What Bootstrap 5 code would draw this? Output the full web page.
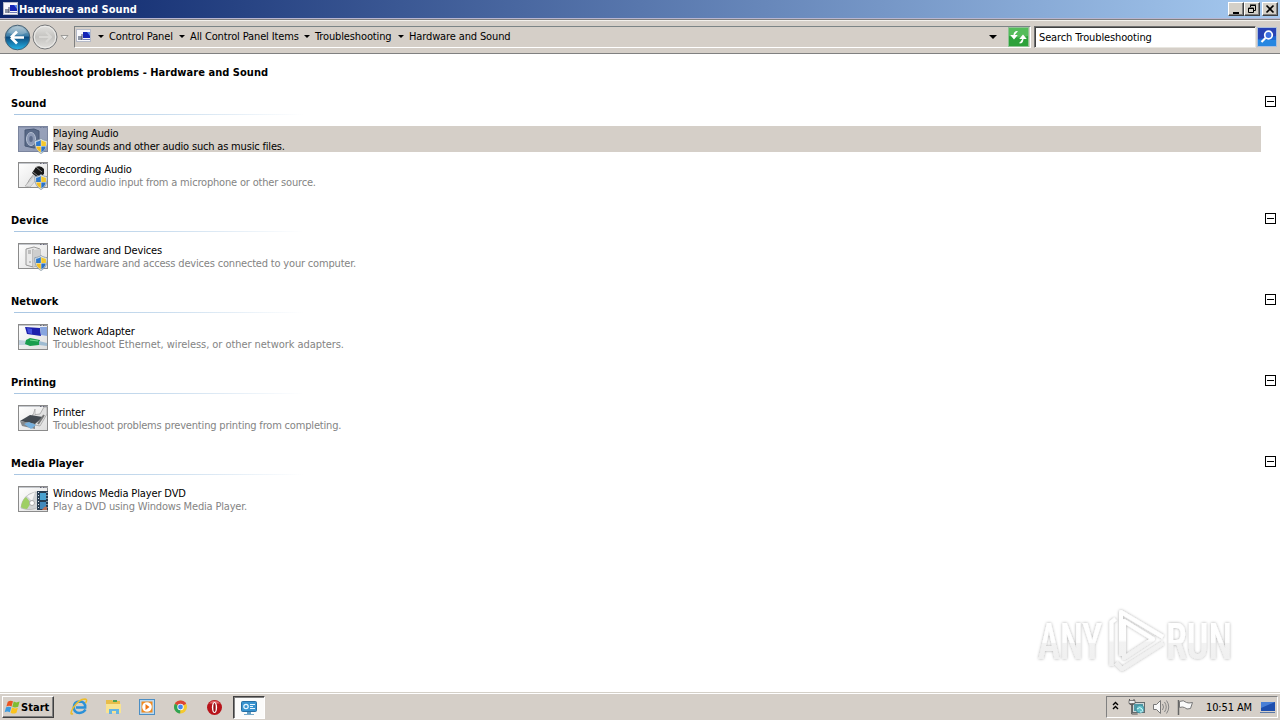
<!DOCTYPE html>
<html lang="en">
<head>
  <meta charset="UTF-8" />
  <title>Hardware and Sound</title>
  <link href="https://cdn.jsdelivr.net/npm/bootstrap@5.3.3/dist/css/bootstrap.min.css" rel="stylesheet" />
  <style>
    body {
      font: 11px/13px "DejaVu Sans Condensed", "DejaVu Sans", sans-serif;
      font-stretch: condensed;
      letter-spacing: -0.13px;
      color: #000;
      background: #fff;
      height: 720px;
      overflow: hidden;
      white-space: nowrap;
    }
    svg { flex: none; display: block; }
    .fw-bold { letter-spacing: 0.04px; }
    .face { background: #d5cfc8; }
    .titlebar {
      height: 18px;
      padding-left: 3px;
      padding-right: 2px;
      background: linear-gradient(90deg, #0a246a, #a6caf0);
      color: #fff;
    }
    .win-btn {
      width: 16px;
      height: 14px;
      background: #d4d0c8;
      border: 1px solid;
      border-color: #fff #404040 #404040 #fff;
      box-shadow: inset -1px -1px #808080;
    }
    .toolbar-row {
      height: 36px;
      padding: 4px 1px 0 4px;
      border-top: 1px solid #b9b6d0;
      border-bottom: 1px solid #808080;
      box-shadow: inset 0 1px #808080, inset 0 2px #f2f0ec;
    }
    .address {
      width: 957px;
      height: 22px;
      margin-left: 4px;
      margin-top: 3px;
      padding-left: 1px;
      border: 1px solid;
      border-color: #7b8486 #fff #fff #808080;
    }
    .crumb-list { padding-bottom: 2px; }
    .crumb-arrow {
      width: 0;
      border: 3px solid transparent;
      border-top-color: #000;
      border-bottom: 0;
    }
    .search-box {
      width: 222px;
      height: 22px;
      margin: 3px 1px 0 3px;
      padding: 1px 0 0 4px;
      background: #fff;
      border: 1px solid;
      border-color: #707070 #e8e6e0 #e8e6e0 #707070;
      box-shadow: inset 1px 1px #404040;
    }
    .pane { height: 638px; padding: 12px 4px 0 10px; }
    .section-head { height: 17px; padding-left: 1px; }
    .section-line {
      width: 290px;
      height: 1px;
      margin: 0 0 11px 4px;
      background: linear-gradient(90deg, #a9c6e2, #c8dcee 50%, #fff);
    }
    .section-block { height: 81px; }
    .section-block.two { height: 117px; }
    .collapse-box {
      width: 11px;
      height: 11px;
      margin-top: -1px;
      border: 1px solid #000;
      padding: 4px 1px;
    }
    .collapse-box span { display: block; height: 1px; background: #000; }
    .tool-row { height: 26px; margin: 0 15px 10px 8px; }
    .tool-text { padding-top: 1px; }
    .tool-desc { color: #848484; letter-spacing: -0.18px; }
    .tool-desc.wide { letter-spacing: -0.06px; }
    .tool-row.active .tool-text { background: #d5cfc8; }
    .tool-row.active .tool-desc { color: #000; }
    .taskbar {
      height: 28px;
      padding: 3px 2px 0;
      border-top: 1px solid #d4d0c8;
      box-shadow: inset 0 1px #fff;
    }
    .start-btn {
      width: 52px;
      height: 22px;
      padding-left: 1px;
      border: 1px solid;
      border-color: #fff #404040 #404040 #fff;
      box-shadow: inset -1px -1px #808080;
    }
    .task-active {
      width: 32px;
      height: 23px;
      margin-left: 10px;
      background: #fbfbfa;
      border: 1px solid;
      border-color: #404040 #fff #fff #404040;
      box-shadow: inset 1px 1px #808080;
    }
    .tray {
      width: 172px;
      height: 22px;
      padding-left: 5px;
      border: 1px solid;
      border-color: #808080 #fff #fff #808080;
    }
    .watermark { position: absolute; left: 1024px; top: 600px; overflow: visible; letter-spacing: 0; }
  </style>
</head>
<body class="d-flex flex-column">

  <!-- shared drawings -->
  <svg width="0" height="0" class="position-absolute">
    <defs>
      <linearGradient id="gBack" x1="0" y1="0" x2="0" y2="1">
        <stop offset="0" stop-color="#a9bfca" /><stop offset=".42" stop-color="#3f80aa" />
        <stop offset=".5" stop-color="#0d4d80" /><stop offset="1" stop-color="#27b6ea" />
      </linearGradient>
      <linearGradient id="gFwd" x1="0" y1="0" x2="0" y2="1">
        <stop offset="0" stop-color="#e4e3e0" /><stop offset=".5" stop-color="#c4c3c0" /><stop offset="1" stop-color="#e2e1de" />
      </linearGradient>
      <linearGradient id="gWin" x1="0" y1="0" x2="1" y2="1">
        <stop offset="0" stop-color="#fff" /><stop offset="1" stop-color="#dedede" />
      </linearGradient>
      <symbol id="shield" viewBox="0 0 14 16">
        <path d="M7 .5C5 2 3 2.500 .8 2.600 .6 8 2 13 7 15.500 12 13 13.400 8 13.200 2.600 11 2.500 9 2 7 .5Z" fill="#e6edf2" stroke="#8292a0" stroke-width=".8" />
        <path d="M6.800 2C5.300 3 3.800 3.600 2.100 3.800V8h4.700Z" fill="#2f78cc" />
        <path d="M7.300 2C8.800 3 10.200 3.600 11.900 3.800V8H7.300Z" fill="#f5c92c" />
        <path d="M2.200 8.400C2.800 11 4.200 13 6.800 14.300V8.400Z" fill="#f3bd20" />
        <path d="M11.800 8.400C11.200 11 9.800 13 7.300 14.300V8.400Z" fill="#2d72c4" />
      </symbol>
      <symbol id="frame" viewBox="0 0 31 27">
        <rect x=".5" y=".5" width="29" height="25" fill="url(#gWin)" stroke="#8b8b8b" />
        <path d="M1 1.500h28.500" stroke="#c4c7cc" />
        <path d="M22 1.500h1.500M25 1.500h1.500M27.500 1.500h1" stroke="#667" />
      </symbol>
      <symbol id="mini" viewBox="0 0 16 14">
        <rect x=".5" y=".5" width="14" height="12" fill="#f8f8fb" stroke="#b5bac8" />
        <path d="M7 3h7v6H7z" fill="#1526b5" /><path d="M11 3h3v4z" fill="#5d8df0" />
        <path d="M2 7h4v4H2z" fill="#8e96a5" /><path d="M6 5v6" stroke="#444d66" /><path d="M7 10.500h7" stroke="#7380b8" />
      </symbol>
      <symbol id="flag" viewBox="0 0 18 16">
        <path d="M4 2.500Q7 .5 9.500 2L8 7.500Q5.500 6 2.500 7.500Z" fill="#ea5421" />
        <path d="M10.300 2.300Q13 4 16.500 2.300L15 7.800Q11.500 9.500 8.800 7.800Z" fill="#7fbc32" />
        <path d="M2.200 8.300Q5 7 7.700 8.300L6.200 13.500Q3.500 12 .7 13.500Z" fill="#3b9be0" />
        <path d="M8.500 8.600Q11.500 10.300 14.700 8.700L13.200 14Q10 15.800 7 14Z" fill="#fbc31c" />
      </symbol>
    </defs>
  </svg>

  <div class="titlebar d-flex align-items-center flex-shrink-0">
    <svg width="16" height="14"><use href="#mini" /></svg>
    <span class="fw-bold">Hardware and Sound</span>
    <div class="win-btn ms-auto">
      <svg width="14" height="12"><path d="M4 9h6v2H4z" /></svg>
    </div>
    <div class="win-btn">
      <svg width="14" height="12" fill="none" stroke="#000"><path d="M5.500 4V2.500h5v5H9M5 2h6" /><path d="M3.500 5h5v4.500h-5zM3 5.500h6" /></svg>
    </div>
    <div class="win-btn" style="margin-left: 2px">
      <svg width="14" height="12"><path d="M3.500 2.500l7 7M10.500 2.500l-7 7" stroke="#000" stroke-width="1.700" /></svg>
    </div>
  </div>

  <div class="toolbar-row face d-flex flex-shrink-0">
    <svg width="66" height="28">
      <circle cx="13.500" cy="14.500" r="12.300" fill="url(#gBack)" stroke="#466073" />
      <path d="M4 9.500a10.500 10.500 0 0 1 19 0q-9 5-19 0" fill="#fff" opacity=".22" />
      <path d="M7 14.500l6-6M7 14.500l6 6M8 14.500h12" stroke="#fff" stroke-width="2.700" fill="none" />
      <circle cx="41" cy="14" r="12" fill="url(#gFwd)" stroke="#77797b" />
      <circle cx="41" cy="14" r="10.700" fill="none" stroke="#eeeeec" />
      <path d="M35 14h11M42 9l5 5-5 5" stroke="#d9d8d5" stroke-width="2" fill="none" />
      <path d="M57 12.500h7l-3.500 4z" fill="#f7f7f5" stroke="#8a8a88" stroke-width=".8" />
    </svg>
    <div class="address d-flex align-items-center">
      <svg width="16" height="16"><use href="#mini" height="14" /></svg>
      <div id="crumbs" class="crumb-list d-flex align-items-center"></div>
      <svg width="9" height="5" class="ms-auto" style="margin-right: 10px"><path d="M0 0h8L4 4z" /></svg>
      <svg width="22" height="20">
        <rect x=".5" y=".5" width="20" height="19" fill="#2da23b" stroke="#8fc394" />
        <path d="M1 1h19v8Q10 12 1 9z" fill="#6ccb6d" opacity=".65" />
        <path d="M9.500 4.500Q6 4.500 6 9M3.500 8.500h5L6 11.500z" fill="#fff" stroke="#fff" stroke-width="1.200" />
        <path d="M11.500 16Q15 16 15 11M12.500 11.500h5L15 8.500z" fill="#fff" stroke="#fff" stroke-width="1.200" />
      </svg>
    </div>
    <div class="search-box d-flex align-items-center">Search Troubleshooting</div>
    <svg width="20" height="22" style="margin-top: 3px">
      <rect x=".5" y="1.500" width="19" height="19" fill="#1f67d2" stroke="#a9bddd" />
      <path d="M1 2h18v8L1 13z" fill="#2842b4" /><path d="M1 14h18v6H1z" fill="#2995e7" opacity=".7" />
      <circle cx="11.500" cy="9" r="3.800" fill="#3d6fe0" stroke="#fff" stroke-width="1.700" />
      <path d="M8.500 12L4.500 16" stroke="#fff" stroke-width="2.200" />
    </svg>
  </div>

  <div class="pane flex-shrink-0">
    <div class="fw-bold" style="height: 31px">Troubleshoot problems - Hardware and Sound</div>
    <div id="sections"></div>
  </div>

  <div class="taskbar face d-flex flex-shrink-0">
    <div class="start-btn d-flex align-items-center fw-bold">
      <svg width="17" height="16"><use href="#flag" /></svg>Start
    </div>
    <svg width="169" height="22">
      <!-- browser -->
      <g fill="none">
        <path d="M31.500 13.500Q29.500 17 25.500 17Q19.800 17 19.800 11.300Q20 5.700 25.700 5.500Q31.500 5.800 31.200 11.500H22" stroke="#2b91d8" stroke-width="2.500" />
        <path d="M19 17.500Q15 19.500 19 12Q25 3 31 3Q34 3.200 31.500 7" stroke="#edbd2a" stroke-width="1.500" />
      </g>
      <!-- folder -->
      <path d="M52 6V4h6l1 1h7v12H52z" fill="#e8bd4a" /><path d="M52 8h15v9H52z" fill="#f8e391" />
      <path d="M55 18v-5h10v5h-3v-3h-4v3z" fill="#65b4e2" /><path d="M59 5h4" stroke="#4aa152" stroke-width="2" />
      <!-- media player -->
      <rect x="85.500" y="3.500" width="15" height="15" fill="#b9d9f1" stroke="#4b8ec4" />
      <rect x="87.500" y="5.500" width="11" height="11" fill="#f28a1e" />
      <circle cx="93" cy="11" r="4.800" fill="#fff" /><path d="M91.500 8v6l4-3z" fill="#ef7412" />
      <!-- chrome -->
      <circle cx="126.500" cy="11" r="6.500" fill="#f5c92e" />
      <path d="M126.500 11L120.900 7.700a6.500 6.500 0 0 1 11.300 0z" fill="#dc4437" />
      <path d="M126.500 11L120.900 7.700a6.500 6.500 0 0 0 5.200 9.800z" fill="#2fa354" />
      <circle cx="126.500" cy="11" r="3.200" fill="#fff" /><circle cx="126.500" cy="11" r="2.400" fill="#4487ee" />
      <!-- opera -->
      <circle cx="160.500" cy="11.500" r="7.500" fill="#b8141b" />
      <path d="M155 7.500a7 7 0 0 1 11 0z" fill="#e2666a" />
      <ellipse cx="160.500" cy="11.500" rx="2.600" ry="5.500" fill="#fff" /><ellipse cx="160.500" cy="11.500" rx="1.200" ry="4.500" fill="#981017" />
    </svg>
    <div class="task-active d-flex align-items-center justify-content-center">
      <svg width="18" height="18">
        <rect x="1.500" y="2.500" width="15" height="10" rx="1" fill="#3793cf" stroke="#276fa5" />
        <circle cx="6" cy="7.500" r="2.200" fill="none" stroke="#e8f6ff" stroke-width="1.200" />
        <path d="M10 5.500h5M10 7.500h3M10 9.500h5" stroke="#e5f4ff" />
        <path d="M7 13h4v2H7z" fill="#639dc2" /><path d="M4 15.500h10" stroke="#74a8c9" />
      </svg>
    </div>
    <div class="tray d-flex align-items-center ms-auto">
      <svg width="94" height="20">
        <path d="M1 8l2.500-2.500L6 8M1 12l2.500-2.500L6 12" fill="none" stroke="#000" stroke-width="1.400" />
        <!-- network -->
        <rect x="20.500" y="5.500" width="12" height="10" fill="#cfd9da" stroke="#636b6d" /><path d="M22 7h9v7h-9z" fill="#519ba8" />
        <path d="M17.500 2v5q2.500 2 4.500 0V2M19.700 7v10h6" fill="none" stroke="#555" /><path d="M17 3.500h6v3h-6z" fill="#eee" stroke="#555" stroke-width=".7" />
        <circle cx="28" cy="12" r="4" fill="#62bfc8" stroke="#3b8394" stroke-width=".7" /><path d="M25 12q3-3 5 0t-2 3" stroke="#dff" fill="none" />
        <!-- speaker -->
        <path d="M41.500 7.500h3l4-4v13l-4-4h-3z" fill="#f8f8f8" stroke="#777" />
        <path d="M50.500 7q2 3 0 6M52.500 5q3.500 5 0 10M54.500 3.500q4.500 6.500 0 13" fill="none" stroke="#858585" />
        <!-- action flag -->
        <path d="M66.500 3v15" stroke="#666" stroke-width="1.500" /><path d="M67.500 4.500q4-2 7 1 2 1 6 0l-2 6q-4 1.500-6-1-2-1-5 0z" fill="#fafafa" stroke="#777" />
      </svg>
      <span>10:51 AM</span>
      <svg width="17" height="16" class="ms-auto"><path d="M1 3h14v9H1z" fill="#1e4fae" /><path d="M1 3h14L1 9z" fill="#497fd6" /><path d="M0 13.500h15" stroke="#5a78a6" /></svg>
    </div>
  </div>

  <svg class="watermark" width="220" height="84">
    <defs>
      <linearGradient id="gMark" gradientUnits="userSpaceOnUse" x1="0" y1="8" x2="0" y2="72">
        <stop offset="0" stop-color="#fff" /><stop offset=".5" stop-color="#fefefe" /><stop offset=".54" stop-color="#f2f2f2" /><stop offset="1" stop-color="#f0f0f0" />
      </linearGradient>
      <linearGradient id="gLetters" gradientUnits="userSpaceOnUse" x1="0" y1="-36" x2="0" y2="0">
        <stop offset="0" stop-color="#fff" /><stop offset=".54" stop-color="#fefefe" /><stop offset=".56" stop-color="#f2f2f2" /><stop offset="1" stop-color="#f0f0f0" />
      </linearGradient>
      <filter id="halo" filterUnits="userSpaceOnUse" x="0" y="0" width="220" height="84">
        <feDropShadow dx="0" dy="0" stdDeviation="1.800" flood-color="#000" flood-opacity=".34" />
      </filter>
    </defs>
    <g filter="url(#halo)" fill="url(#gLetters)" font-family="Roboto, sans-serif" font-size="50" font-weight="500">
      <text transform="translate(14 59) scale(.745 1)">ANY</text>
      <text transform="translate(142 59) scale(.765 1)">RUN</text>
      <g fill="none" stroke="url(#gMark)" stroke-width="4" stroke-linejoin="round">
        <path d="M87.500 66V22l4-3" /><path d="M97 56V12l42 25" /><path d="M100 21v37l29-19z" /><path d="M92 63l6 6 41-26" />
      </g>
    </g>
  </svg>

  <script src="https://cdn.jsdelivr.net/npm/bootstrap@5.3.3/dist/js/bootstrap.bundle.min.js"></script>
  <script>
    const crumbs = [
      { name: 'Control Panel', width: 65 },
      { name: 'All Control Panel Items', width: 109 },
      { name: 'Troubleshooting', width: 78 },
      { name: 'Hardware and Sound', width: 102 }
    ];

    const shield = '<use href="#shield" x="16" y="12" width="14" height="16" />';

    const art = {
      speaker: `<rect width="30" height="26" fill="#7482a5" opacity=".72" />
        <path d="M7 4l9-1 5 2v16l-5 1-9-2z" fill="#596987" stroke="#485875" />
        <ellipse cx="13" cy="13" rx="4.500" ry="6.500" fill="#8c99b5" stroke="#b6c1d4" /><ellipse cx="13" cy="13" rx="1.800" ry="3" fill="#5d6d8d" />${shield}`,
      mic: `<path d="M8 24Q11 17 17 11" stroke="#999" fill="none" /><path d="M7 24l10-11 3 3-8 9z" fill="#dedede" stroke="#aaa" stroke-width=".6" />
        <path d="M14 11l4-6q5-2 8 2v5l-6 4z" fill="#191919" /><path d="M18 5l6 5M15 10l5 4" stroke="#888" />${shield}`,
      computer: `<path d="M8 6l8-2 6 2v16l-7 2-7-2z" fill="#e9e9e9" stroke="#999" /><path d="M15 6v18M10 8h3M10 10h3M11 19h2" stroke="#939393" />
        <path d="M22 6v16l-7 2V7z" fill="#cecece" />${shield}`,
      network: `<path d="M7 3l15 1 1 8-14-2z" fill="#1c20ac" /><path d="M9 4l5 1v5l-4-1z" fill="#4451dc" /><path d="M22 3h7v9l-6-1z" fill="#88a5df" />
        <path d="M1 16l9 1v4H1z" fill="#c0d0dd" /><path d="M8 16l4-2 10 2-1 5-9 1-5-2z" fill="#1a9d4e" /><path d="M12 16l8 1" stroke="#71da91" /><path d="M21 17l8 2v3l-8-1z" fill="#9ebbd1" />`,
      printer: `<path d="M14 10l8-1 4-7h3v7l-7 12-5-1z" fill="#e1e1e1" stroke="#999" stroke-width=".7" /><path d="M15 10l2-6v6" fill="#eee" stroke="#999" stroke-width=".6" />
        <path d="M2 16l10-6 13 2-8 7z" fill="#444b52" /><path d="M2 16l15 3v5L4 21z" fill="#85898c" /><path d="M6 19l5-2 7 3-5 4z" fill="#76b0dd" /><path d="M20 19l6-9" stroke="#777" stroke-width="2" />`,
      dvd: `<path d="M3 22Q4 9 17 6h5v14q-8 6-19 2z" fill="#d0d3d5" stroke="#aaa" stroke-width=".6" /><path d="M3 21Q4 14 8 11l5 6-4 6q-4 0-6-2z" fill="#9ecf64" />
        <path d="M9 10L17 6l-3 9z" fill="#f5f5f5" /><circle cx="14" cy="17" r="2.500" fill="#fff" stroke="#aaa" />
        <path d="M19 5h11v19H19z" fill="#273c51" /><path d="M22 7h6v7h-6z" fill="#4aa2d0" /><path d="M22 16h6v7h-6z" fill="#4389bb" /><path d="M20.500 6v18M29 6v18" stroke="#dce5ed" stroke-dasharray="1 2" /><path d="M24 24q3-5 5-3v3z" fill="#bc7158" />`
    };

    const sections = [
      { title: 'Sound', tools: [
        { icon: 'speaker', name: 'Playing Audio', desc: 'Play sounds and other audio such as music files.', active: true },
        { icon: 'mic', name: 'Recording Audio', desc: 'Record audio input from a microphone or other source.' }
      ] },
      { title: 'Device', tools: [
        { icon: 'computer', name: 'Hardware and Devices', desc: 'Use hardware and access devices connected to your computer.' }
      ] },
      { title: 'Network', tools: [
        { icon: 'network', name: 'Network Adapter', desc: 'Troubleshoot Ethernet, wireless, or other network adapters.', wide: true }
      ] },
      { title: 'Printing', tools: [
        { icon: 'printer', name: 'Printer', desc: 'Troubleshoot problems preventing printing from completing.' }
      ] },
      { title: 'Media Player', tools: [
        { icon: 'dvd', name: 'Windows Media Player DVD', desc: 'Play a DVD using Windows Media Player.' }
      ] }
    ];

    document.getElementById('crumbs').innerHTML = crumbs.map((crumb, i) => `
      <span class="crumb-arrow" style="margin-left: ${i ? 5 : 6}px"></span>
      <span style="margin-left: 5px; width: ${crumb.width}px">${crumb.name}</span>
    `).join('');

    function renderTool(tool) {
      return `
        <div class="tool-row d-flex ${tool.active ? 'active' : ''}">
          <svg width="35" height="30"><use href="#frame" width="31" height="27" />${art[tool.icon]}</svg>
          <div class="tool-text flex-grow-1">
            <div>${tool.name}</div>
            <div class="tool-desc ${tool.wide ? 'wide' : ''}">${tool.desc}</div>
          </div>
        </div>`;
    }

    document.getElementById('sections').innerHTML = sections.map(section => `
      <div class="section-block ${section.tools.length > 1 ? 'two' : ''}">
        <div class="section-head d-flex justify-content-between">
          <div class="fw-bold">${section.title}</div>
          <div class="collapse-box"><span></span></div>
        </div>
        <div class="section-line"></div>
        ${section.tools.map(renderTool).join('')}
      </div>
    `).join('');
  </script>
</body>
</html>
